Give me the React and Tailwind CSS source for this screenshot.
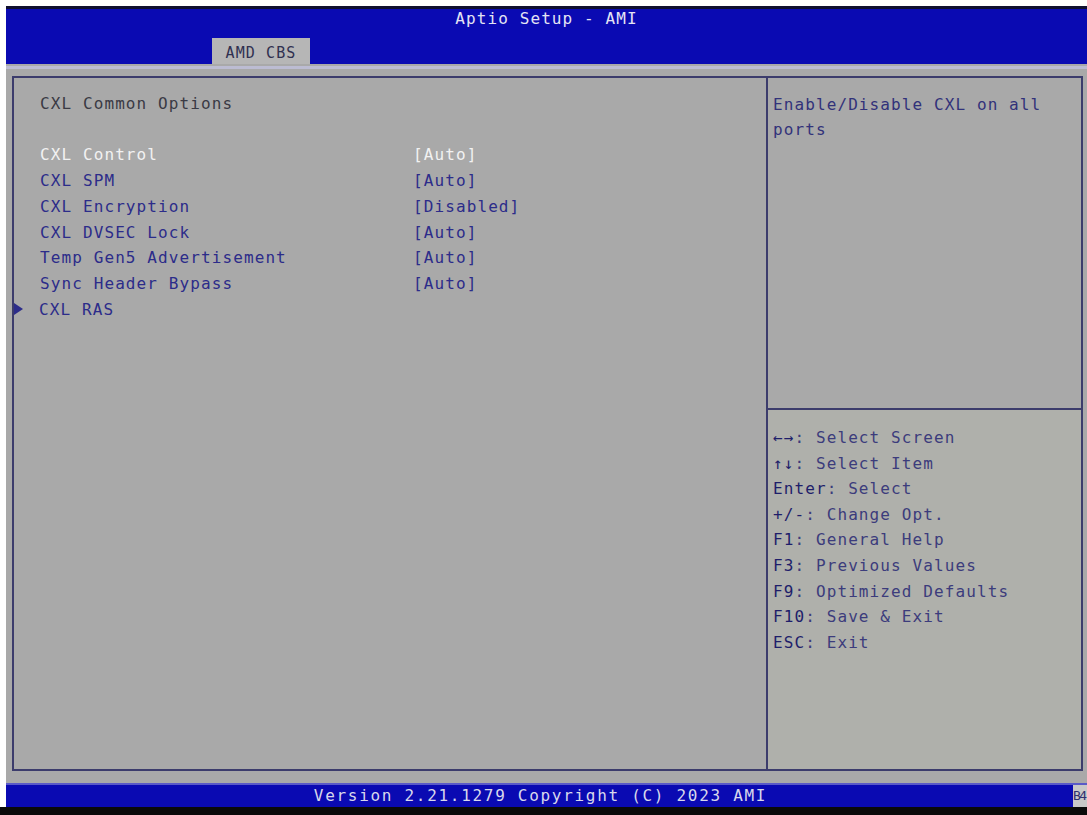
import React from "react";

const mono = { fontFamily: '"DejaVu Sans Mono", "Liberation Mono", monospace' };

const items = [
  ["CXL Control", "[Auto]", true],
  ["CXL SPM", "[Auto]"],
  ["CXL Encryption", "[Disabled]"],
  ["CXL DVSEC Lock", "[Auto]"],
  ["Temp Gen5 Advertisement", "[Auto]"],
  ["Sync Header Bypass", "[Auto]"],
];

const help = [
  ["\u2190\u2192", ": Select Screen"],
  ["\u2191\u2193", ": Select Item"],
  ["Enter", ": Select"],
  ["+/-", ": Change Opt."],
  ["F1", ": General Help"],
  ["F3", ": Previous Values"],
  ["F9", ": Optimized Defaults"],
  ["F10", ": Save & Exit"],
  ["ESC", ": Exit"],
];

export default function App() {
  return (
    <div
      className="w-[1087px] h-[815px] bg-white flex flex-col overflow-hidden text-[16px] tracking-[1.1px]"
      style={mono}
    >
      <div className="flex flex-col flex-1 pl-[6px] pt-[6px]">
        {/* header */}
        <div className="h-[58px] bg-[#0a0ab2] border-t-[3px] border-[#101030] flex flex-col">
          <div className="h-[20px] text-center text-[#e4e4f4] leading-[20px]">Aptio Setup - AMI</div>
          <div className="flex-1 flex items-end">
            <div className="ml-[206px] w-[98px] h-[26px] bg-[#b6b6b6] text-[#303050] text-center leading-[26px] pt-[2px] text-[15px]">
              AMD CBS
            </div>
          </div>
        </div>
        {/* content */}
        <div className="flex-1 bg-[#a9a9a9] flex flex-col">
          <div className="h-[3px] mt-[2px] bg-[#bcbcd2]" />
          <div className="flex-1 ml-[6px] mr-[4px] mt-[7px] mb-[12px] border-[2px] border-[#3c3c6c] flex">
            {/* left panel */}
            <div className="w-[754px] border-r-[2px] border-[#3c3c6c] pt-[13px] pl-[26px] leading-[25.7px]">
              <div className="text-[#3a3a44]">CXL Common Options</div>
              <div className="h-[25.7px]" />
              {items.map(([l, v, sel]) => (
                <div key={l} className="flex">
                  <div className={`w-[373px] ${sel ? "text-[#f2f2f2]" : "text-[#2c2c8a]"}`}>{l}</div>
                  <div className={sel ? "text-[#f2f2f2]" : "text-[#2c2c8a]"}>{v}</div>
                </div>
              ))}
              <div className="flex items-center ml-[-25px]">
                <svg width="9" height="12" viewBox="0 0 9 12" className="mr-[15px] ml-[-1px]">
                  <path d="M0 0 L9 6 L0 12 Z" fill="#2c2c8a" />
                </svg>
                <span className="text-[#2c2c8a] ml-[1px]">CXL RAS</span>
              </div>
            </div>
            {/* right panel */}
            <div className="flex-1 flex flex-col">
              <div className="h-[332px] border-b-[2px] border-[#3c3c6c] pt-[14px] pl-[5px] leading-[25px] text-[#32327a]">
                <div>Enable/Disable CXL on all</div>
                <div>ports</div>
              </div>
              <div className="pt-[15px] pl-[5px] leading-[25.6px] bg-[#afb0ab] flex-1">
                {help.map(([k, d]) => (
                  <div key={k} className="whitespace-pre">
                    <span className="text-[#1e1e6a]">{k}</span>
                    <span className="text-[#3c3c7c]">{d}</span>
                  </div>
                ))}
              </div>
            </div>
          </div>
        </div>
        {/* footer */}
        <div className="h-[24px] bg-[#0a0ab2] flex border-t-[2px] border-[#5a5ac8]">
          <div className="flex-1 text-center text-[#d8d8ec] leading-[22px] tracking-[1.7px] pl-[2px]">
            Version 2.21.1279 Copyright (C) 2023 AMI
          </div>
          <div className="w-[14px] bg-[#c8c8c8] text-[#303070] text-[13px] leading-[22px] tracking-[-1.5px] overflow-hidden">B4</div>
        </div>
      </div>
      <div className="h-[8px] bg-[#0a0a0a]" />
    </div>
  );
}
